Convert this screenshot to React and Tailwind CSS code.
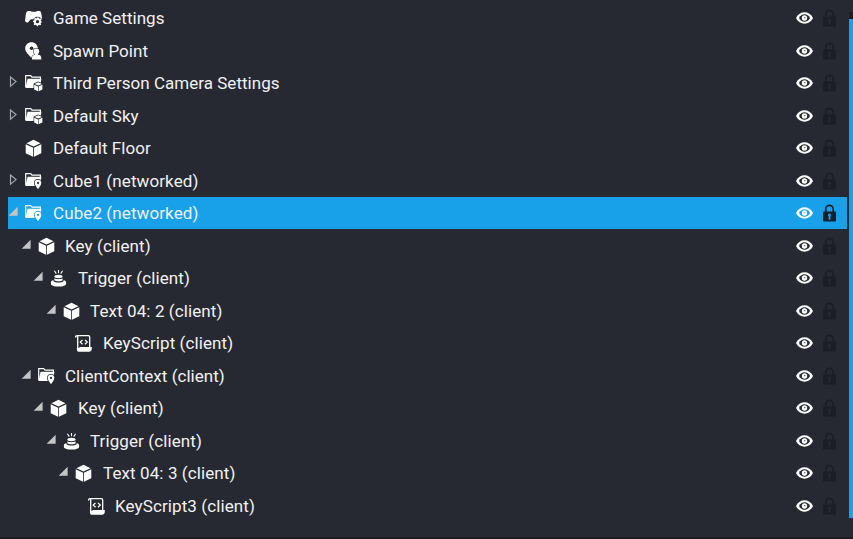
const BG = "#272932";
const SELECTED = "#18a0e8";

const rows = [
  { icon: "game", label: "Game Settings", level: 0 },
  { icon: "spawn", label: "Spawn Point", level: 0 },
  { icon: "folderCube", label: "Third Person Camera Settings", level: 0, arrow: "closed" },
  { icon: "folderCube", label: "Default Sky", level: 0, arrow: "closed" },
  { icon: "cube", label: "Default Floor", level: 0 },
  { icon: "folderPin", label: "Cube1 (networked)", level: 0, arrow: "closed", wide: true },
  { icon: "folderPin", label: "Cube2 (networked)", level: 0, arrow: "open", selected: true, wide: true },
  { icon: "cube", label: "Key (client)", level: 1, arrow: "open", wide: true },
  { icon: "trigger", label: "Trigger (client)", level: 2, arrow: "open", wide: true },
  { icon: "cube", label: "Text 04: 2 (client)", level: 3, arrow: "open", wide: true },
  { icon: "script", label: "KeyScript (client)", level: 4, wide: true },
  { icon: "folderPin", label: "ClientContext (client)", level: 1, arrow: "open" },
  { icon: "cube", label: "Key (client)", level: 2, arrow: "open", wide: true },
  { icon: "trigger", label: "Trigger (client)", level: 3, arrow: "open", wide: true },
  { icon: "cube", label: "Text 04: 3 (client)", level: 4, arrow: "open", wide: true },
  { icon: "script", label: "KeyScript3 (client)", level: 5, wide: true },
];

const indents = ["w-0", "w-[12.5px]", "w-[25px]", "w-[37.5px]", "w-[50px]", "w-[62.5px]"];

function Folder() {
  return (
    <>
      <path d="M.7 13V1.700h5l1.300 1.500h8.400V5" fill="none" stroke="#fff" strokeWidth="1.200" />
      <path d="M2.600 4.700h13.800l-1.300 9.300H.4z" fill="#fff" />
    </>
  );
}

function ItemIcon({ name, bg }) {
  return (
    <svg width="18" height="18" viewBox="0 0 18 18" className="shrink-0" fill="#fff">
      {name === "game" && (
        <>
          <path d="M3 2h2.500l1.200.8h4.200L12.100 2h2.400c1.200.2 1.700 1.500 2 3.500l.6 5.500c0 1.700-1.600 2.600-2.600 1.500L11.800 10.300H5.900L3.400 12.900C2.100 14.200-.1 13.500.1 11.300L.8 5.500C1.100 3.600 1.700 2.300 3 2z" />
          <circle cx="12.500" cy="12.700" r="4.900" fill={bg} />
          <circle cx="12.500" cy="12.700" r="2.600" fill="none" stroke="#fff" strokeWidth="2" />
          <circle cx="12.500" cy="12.700" r="3.900" fill="none" stroke="#fff" strokeWidth="1.200" strokeDasharray="1.530 1.530" strokeDashoffset="0.770" />
        </>
      )}
      {name === "spawn" && (
        <>
          <path d="M6.500.3c3.500 0 6.300 2.700 6.300 6.200 0 3.500-4 6.500-6.300 9.500C4 13 .2 10 .2 6.500.2 3 3 .3 6.500.3z" />
          <circle cx="6.600" cy="6.200" r="1.800" fill={bg} />
          <circle cx="11.400" cy="9.400" r="3.300" fill={bg} />
          <path d="M6.500 18v-2.500c0-2 1.500-3.100 3.500-3.100h3.500v5.600z" fill={bg} />
          <circle cx="11.400" cy="9.400" r="2.800" />
          <path d="M7 17.500v-1.800c0-1.800 1.300-2.900 3-2.900l-.2-1.500h3.200v1.500c1.900 0 3.300 1.100 3.300 2.900v1.800z" />
        </>
      )}
      {name === "folderCube" && (
        <>
          <Folder />
          <path d="M13.300 7.500l4.700 2.100v6.200l-4.700 2.400-4.700-2.400V9.600z" fill={bg} />
          <path d="M13.300 8.200l3.700 1.700-3.700 1.700-3.700-1.700z" />
          <path d="M9.200 10.700l3.800 1.700v4.900l-3.800-1.900zM17.400 10.700l-3.800 1.700v4.900l3.800-1.900z" />
        </>
      )}
      {name === "folderPin" && (
        <>
          <Folder />
          <path d="M13 7a4 4 0 0 1 4 4c0 2.800-2.400 5.200-4 7.100-1.600-1.900-4-4.300-4-7.100A4 4 0 0 1 13 7z" fill={bg} />
          <path d="M13 7.700a3.300 3.300 0 0 1 3.300 3.300c0 2.200-2.100 4.200-3.300 6.200-1.200-2-3.300-4-3.300-6.200A3.300 3.300 0 0 1 13 7.700z" />
          <circle cx="13" cy="10.900" r="1.100" fill={bg} />
        </>
      )}
      {name === "cube" && (
        <>
          <path d="M8.500.8l7 3.400-7 3.400-7-3.400z" />
          <path d="M.7 5.300l7.400 3.500v8.900L.7 14.200zM16.300 5.300L8.900 8.800v8.900l7.400-3.500z" />
        </>
      )}
      {name === "trigger" && (
        <>
          <path d="M8.500 1v3.200M4.400 1.800l1.900 2.800M12.600 1.800l-1.900 2.800" stroke="#fff" strokeWidth="1.100" fill="none" />
          <ellipse cx="8.500" cy="7.500" rx="4.100" ry="1.700" />
          <path d="M4.400 9.300c1.800 1.200 6.400 1.200 8.200 0v1.900c-1.800 1.500-6.400 1.500-8.200 0z" />
          <path d="M3.400 11C1.800 11.500.9 12.200.9 13.400v1.300c0 1.800 3.400 2.900 7.600 2.900s7.600-1.100 7.600-2.900v-1.300c0-1.200-.9-1.900-2.500-2.400v1.300c-1.800 1.700-8.400 1.700-10.200 0z" />
        </>
      )}
      {name === "script" && (
        <>
          <path d="M.8 3.500c-.4-1 .1-1.900 1.300-1.900h11.200c.9 0 1.400.5 1.400 1.400v10M2.700 2v12.500" fill="none" stroke="#fff" strokeWidth="1.300" />
          <path d="M4.800 13h12v1.800c0 1.700-1 2.900-2.600 2.900H4.200c-1.400 0-2.300-.9-2.300-2.300V13.900h1.500c.6 0 1.100-.2 1.400-.9z" />
          <path d="M7.500 5.900L5.300 8.100l2.200 2.200M10 5.900l2.200 2.200-2.200 2.200" fill="none" stroke="#fff" strokeWidth="1.300" />
        </>
      )}
    </svg>
  );
}

function Arrow({ kind }) {
  return (
    <svg width="10" height="12" viewBox="0 0 10 12" className="mb-[2px] shrink-0">
      {kind === "closed" && <path d="M2.500 1v9.200L8 5.600z" fill="none" stroke="#a5a6ac" strokeWidth="1.200" />}
      {kind === "open" && <path d="M9.600.8v9H.6z" fill="#c4c4c6" />}
    </svg>
  );
}

function Eye({ bg }) {
  return (
    <svg width="17" height="12" viewBox="0 0 17 12" className="shrink-0">
      <path d="M0 6C3.400-1.600 13.600-1.600 17 6c-3.400 7.600-13.600 7.600-17 0z" fill="#fff" />
      <path d="M3 6C5.400 1 11.600 1 14 6 11.600 11 5.400 11 3 6z" fill={bg} />
      <circle cx="8.500" cy="6" r="2.700" fill="#fff" />
      <circle cx="8.800" cy="5.700" r=".6" fill={bg} />
    </svg>
  );
}

function Lock({ bg, selected }) {
  const color = selected ? "#15202b" : "#1c1d25";
  return (
    <svg width="14" height="18" viewBox="0 0 14 18" className="shrink-0">
      <path d="M2.800 8.500V5a3.700 3.700 0 0 1 7.400 0v3.500" fill="none" stroke={color} strokeWidth="1.700" />
      <rect x="0" y="7.500" width="13" height="10" rx="1" fill={color} />
      <path d="M6.500 9.500a1.500 1.500 0 0 1 .9 2.700v3.500H5.600v-3.500a1.500 1.500 0 0 1 .9-2.700z" fill={bg} />
    </svg>
  );
}

function Row({ item }) {
  const bg = item.selected ? SELECTED : BG;
  return (
    <li className="h-[32.5px]">
      <div className={`flex h-8 items-center ${item.selected ? "bg-[#18a0e8]" : ""}`}>
        <span className={`shrink-0 ${indents[item.level]}`} />
        <Arrow kind={item.arrow} />
        <span className="w-[7px] shrink-0" />
        <ItemIcon name={item.icon} bg={bg} />
        <span
          className={`flex-1 whitespace-nowrap text-[17px] leading-8 text-[#f1f1f2] ${
            item.level % 2 ? "ml-[9.5px]" : "ml-[10px]"
          } ${item.wide ? "tracking-[0.1px]" : "tracking-[0.03px]"}`}
        >
          {item.label}
        </span>
        <Eye bg={bg} />
        <span className="w-[10px] shrink-0" />
        <Lock bg={bg} selected={item.selected} />
        <span className="w-[10px] shrink-0" />
      </div>
    </li>
  );
}

export default function App() {
  return (
    <div className="flex h-[539px] w-[853px] flex-col overflow-hidden bg-[#272932] font-[Roboto,sans-serif]">
      <div className="flex h-[537px] shrink-0">
        <ul className="ml-2 w-[839px] pt-[2.2px]">
          {rows.map((item, i) => (
            <Row key={i} item={item} />
          ))}
        </ul>
        <div className="ml-[2px] flex w-1 flex-col">
          <div className="mt-3 h-[7px] bg-[#1b1c24]" />
          <div className="h-[499px] bg-[#18a0e8]" />
        </div>
      </div>
      <div className="h-[2px] bg-[#1b1c24]" />
    </div>
  );
}
